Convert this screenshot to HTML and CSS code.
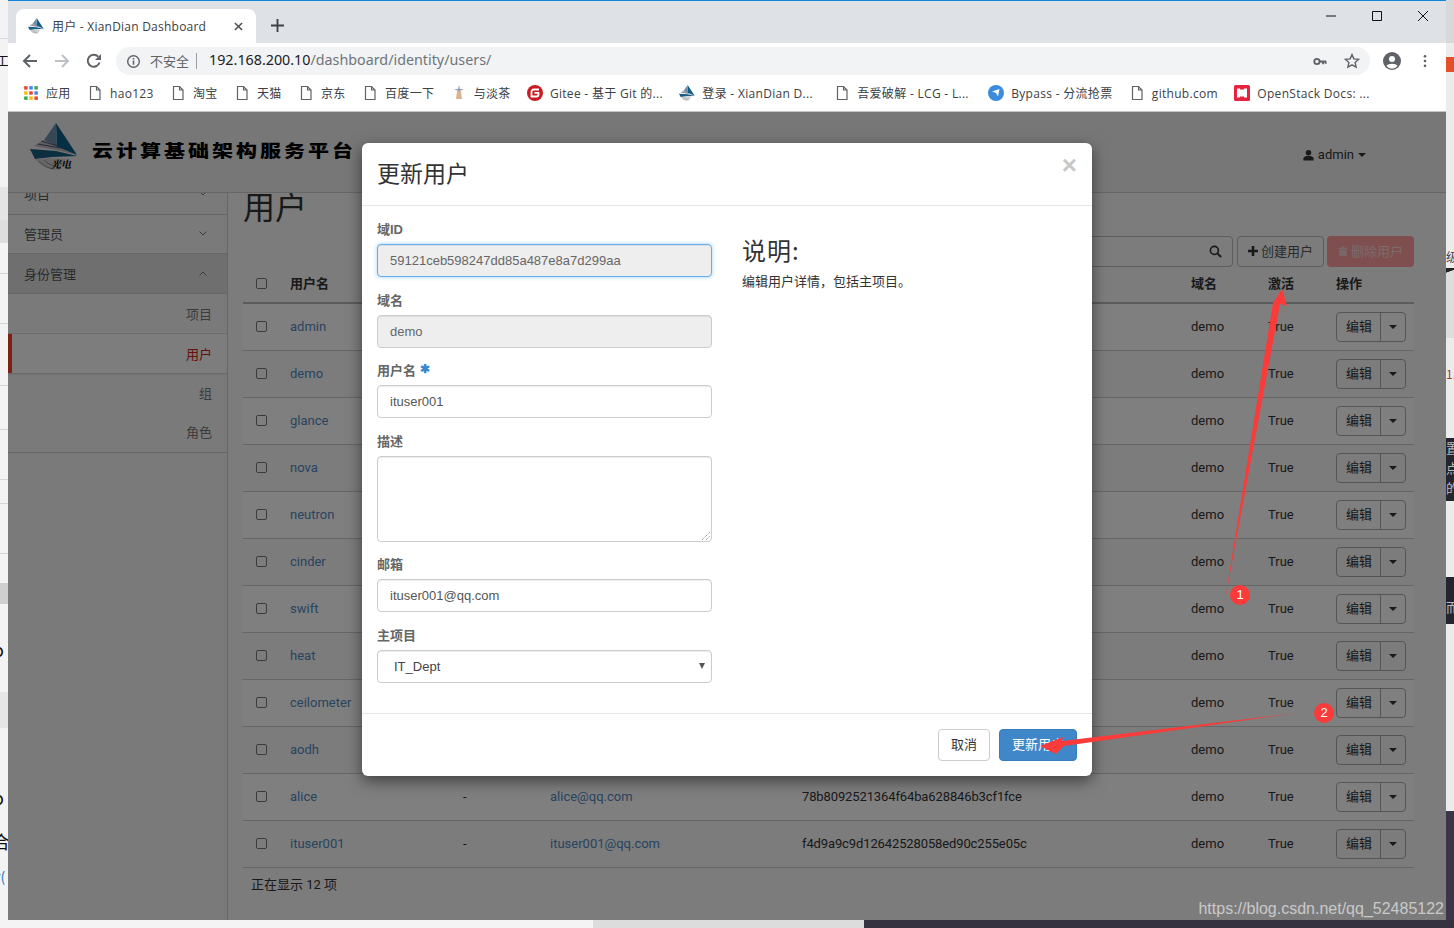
FILE: index.html
```html
<!DOCTYPE html>
<html lang="zh-CN">
<head>
<meta charset="utf-8">
<title>用户 - XianDian Dashboard</title>
<link rel="stylesheet" href="styles.css">
</head>
<body>
<svg class="defs" width="0" height="0" aria-hidden="true">
  <symbol id="doc" viewBox="0 0 16 16"><path d="M3.5 1.5h6l3.5 3.5v9.5h-9.5zM9.5 1.5v3.5h3.5" fill="none" stroke="#5f6368" stroke-width="1.2"/></symbol>
  <symbol id="logo" viewBox="0 0 48 48">
    <path d="M26 0L47 32L27 24Z" fill="#0d5e86"/>
    <path d="M26 0L27 24L14 17Z" fill="#6d8eaa"/>
    <path d="M14 17L27 24L47 32L26 27L4 23Z" fill="#b9b9c4"/>
    <path d="M8 21L30 25M11 18L28 23" stroke="#55556a" stroke-width="1" fill="none"/>
    <path d="M0 26L26 28L47 33L22 34L5 36Z" fill="#175c83"/>
    <path d="M5 36C12 45 22 48 30 46L36 36L20 35Z" fill="#cfcfcf"/>
    <path d="M9 38C14 43 18 45 24 46M14 37C18 41 22 43 28 44" stroke="#777" stroke-width=".8" fill="none"/>
  </symbol>
</svg>
<div class="desktop">
  <div class="side-strip strip-left">
    <span class="bit bit-gong">工具</span>
    <span class="bit bit-o1">o</span>
    <span class="bit bit-o2">o</span>
    <span class="bit bit-he">合</span>
    <span class="bit bit-r">r(</span>
  </div>
  <div class="window">
    <div class="tabstrip">
      <div class="tab">
        <svg class="tab-icon"><use href="#logo"/></svg>
        <span class="tab-title">用户 - XianDian Dashboard</span>
        <svg class="tab-x" viewBox="0 0 10 10"><path d="M1 1l8 8M9 1l-8 8" stroke="#45484c" stroke-width="1.6"/></svg>
      </div>
      <svg class="tab-new" viewBox="0 0 12 12"><path d="M6 0v12M0 6h12" stroke="#3c4043" stroke-width="1.7"/></svg>
      <div class="win-controls">
        <svg viewBox="0 0 12 12"><path d="M1 6h10" stroke="#111" stroke-width="1"/></svg>
        <svg viewBox="0 0 12 12"><path d="M1.5 1.5h9v9h-9z" fill="none" stroke="#111" stroke-width="1"/></svg>
        <svg viewBox="0 0 12 12"><path d="M1 1l10 10M11 1L1 11" stroke="#111" stroke-width="1"/></svg>
      </div>
    </div>
    <div class="toolbar">
      <svg class="nav" viewBox="0 0 16 16"><path d="M15 8H2M8 2L2 8l6 6" fill="none" stroke="#5f6368" stroke-width="2"/></svg>
      <svg class="nav" viewBox="0 0 16 16"><path d="M1 8h13M8 2l6 6-6 6" fill="none" stroke="#bdc1c6" stroke-width="2"/></svg>
      <svg class="nav" viewBox="0 0 16 16"><path d="M13.5 9.5A6 6 0 1 1 12.2 3.7" fill="none" stroke="#5f6368" stroke-width="2"/><path d="M15 1v6H9z" fill="#5f6368"/></svg>
      <div class="omnibox">
        <svg class="info" viewBox="0 0 16 16"><circle cx="8" cy="8" r="6.2" fill="none" stroke="#5f6368" stroke-width="1.5"/><path d="M8 7v4.5M8 4.2v1.6" stroke="#5f6368" stroke-width="1.6"/></svg>
        <span class="insecure">不安全</span>
        <span class="omni-sep"></span>
        <span class="url"><b>192.168.200.10</b>/dashboard/identity/users/</span>
        <svg class="key" viewBox="0 0 16 10"><circle cx="4.5" cy="5" r="3" fill="none" stroke="#5f6368" stroke-width="2.2"/><path d="M7 5h8M11.5 5v3M14.5 5v2.5" stroke="#5f6368" stroke-width="2.2"/></svg>
        <svg class="star" viewBox="0 0 16 16"><path d="M8 1.6l1.9 4.3 4.7.5-3.5 3.1 1 4.6L8 11.8l-4.1 2.3 1-4.6L1.4 6.4l4.7-.5z" fill="none" stroke="#5f6368" stroke-width="1.4"/></svg>
      </div>
      <svg class="avatar" viewBox="0 0 18 18"><circle cx="9" cy="9" r="9" fill="#5f6368"/><circle cx="9" cy="7" r="3" fill="#fff"/><path d="M3.5 14c1.5-3 9.500-3 11 0a7 7 0 0 1-11 0z" fill="#fff"/></svg>
      <svg class="kebab" viewBox="0 0 4 16"><circle cx="2" cy="2.500" r="1.500" fill="#5f6368"/><circle cx="2" cy="8" r="1.500" fill="#5f6368"/><circle cx="2" cy="13.500" r="1.500" fill="#5f6368"/></svg>
    </div>
    <div class="bookmarks">
      <div class="bm">
        <svg class="bm-icon" viewBox="0 0 14 14"><g><rect x="1" y="1" width="3" height="3" fill="#ea4335"/><rect x="5.500" y="1" width="3" height="3" fill="#4285f4"/><rect x="10" y="1" width="3" height="3" fill="#34a853"/><rect x="1" y="5.500" width="3" height="3" fill="#fbbc05"/><rect x="5.500" y="5.500" width="3" height="3" fill="#ea4335"/><rect x="10" y="5.500" width="3" height="3" fill="#4285f4"/><rect x="1" y="10" width="3" height="3" fill="#34a853"/><rect x="5.500" y="10" width="3" height="3" fill="#fbbc05"/><rect x="10" y="10" width="3" height="3" fill="#ea4335"/></g></svg>
        <span>应用</span>
      </div>
      <div class="bm"><svg class="bm-icon"><use href="#doc"/></svg><span>hao123</span></div>
      <div class="bm"><svg class="bm-icon"><use href="#doc"/></svg><span>淘宝</span></div>
      <div class="bm"><svg class="bm-icon"><use href="#doc"/></svg><span>天猫</span></div>
      <div class="bm"><svg class="bm-icon"><use href="#doc"/></svg><span>京东</span></div>
      <div class="bm"><svg class="bm-icon"><use href="#doc"/></svg><span>百度一下</span></div>
      <div class="bm">
        <svg class="bm-icon" viewBox="0 0 16 16"><path d="M8 0l1 4h4L9 6H7L3 4h4z" fill="#9aa0b8"/><path d="M6 6h4l1 8H5z" fill="#d9b48f"/></svg>
        <span>与淡茶</span>
      </div>
      <div class="bm">
        <svg class="bm-icon" viewBox="0 0 16 16"><circle cx="8" cy="8" r="8" fill="#c71d23"/><path d="M12 4.500H7A2.500 2.500 0 0 0 4.500 7v4.500H9.500A2 2 0 0 0 11.500 9.500V7.800H7.500" fill="none" stroke="#fff" stroke-width="1.800"/></svg>
        <span>Gitee - 基于 Git 的...</span>
      </div>
      <div class="bm"><svg class="bm-icon"><use href="#logo"/></svg><span>登录 - XianDian D...</span></div>
      <div class="bm bm-shift-5"><svg class="bm-icon"><use href="#doc"/></svg><span>吾爱破解 - LCG - L...</span></div>
      <div class="bm bm-shift-3">
        <svg class="bm-icon" viewBox="0 0 16 16"><circle cx="8" cy="8" r="8" fill="#3b8cdc"/><path d="M4 6.500L11.500 4 10 11.500 8 8z" fill="#fff"/></svg>
        <span>Bypass - 分流抢票</span>
      </div>
      <div class="bm"><svg class="bm-icon"><use href="#doc"/></svg><span>github.com</span></div>
      <div class="bm">
        <svg class="bm-icon" viewBox="0 0 16 16"><rect width="16" height="16" rx="1.500" fill="#e8233f"/><rect x="3" y="3.500" width="10" height="9" fill="#fff"/><rect x="6" y="3" width="4" height="1.500" fill="#e8233f"/><rect x="6" y="11.500" width="4" height="1.500" fill="#e8233f"/></svg>
        <span>OpenStack Docs: ...</span>
      </div>
    </div>

    <div class="page">
      <header class="site-header">
        <div class="brand">
          <svg class="brand-logo" viewBox="0 0 48 48"><use href="#logo"/><text x="21" y="45" class="brand-mark">光电</text></svg>
          <span class="brand-name">云计算基础架构服务平台</span>
        </div>
        <div class="user-menu">
          <svg class="user-icon" viewBox="0 0 12 12"><circle cx="6" cy="3.500" r="3" fill="#333"/><path d="M0.500 12V9.500C1 7.500 3 7 6 7s5 .5 5.500 2.500V12z" fill="#333"/></svg>
          <span>admin</span><i class="caret"></i>
        </div>
      </header>
      <div class="page-body">
        <nav class="sidebar">
          <div class="nav-list">
            <div class="nav-item">项目<svg class="chev" viewBox="0 0 8 5"><path d="M.5.500L4 4 7.500.500" fill="none" stroke="#777"/></svg></div>
            <div class="nav-item">管理员<svg class="chev" viewBox="0 0 8 5"><path d="M.5.500L4 4 7.500.500" fill="none" stroke="#777"/></svg></div>
            <div class="nav-item nav-open">身份管理<svg class="chev" viewBox="0 0 8 5"><path d="M.5 4.500L4 1l3.500 3.500" fill="none" stroke="#777"/></svg></div>
            <div class="nav-sub nav-sub-line">项目</div>
            <div class="nav-sub nav-active">用户</div>
            <div class="nav-sub">组</div>
            <div class="nav-sub nav-last">角色</div>
          </div>
        </nav>
        <main class="content">
          <h1 class="page-title">用户</h1>
          <div class="table-actions">
            <div class="search-box">
              <svg viewBox="0 0 14 14"><circle cx="5.800" cy="5.800" r="4.300" fill="none" stroke="#333" stroke-width="1.800"/><path d="M9 9l4 4" stroke="#333" stroke-width="2.200"/></svg>
            </div>
            <div class="btn btn-create"><svg viewBox="0 0 10 10"><path d="M5 0v10M0 5h10" stroke="#333" stroke-width="2.600"/></svg>创建用户</div>
            <div class="btn btn-delete"><svg viewBox="0 0 10 11"><path d="M0 2h10v1.500H0zM3.500.500h3v1.500h-3zM1 4h8v7H1z" fill="#f0d0d0"/></svg>删除用户</div>
          </div>
          <div class="users-table">
            <div class="row head"><span class="cell"><i class="check"></i></span><span class="cell">用户名</span><span class="cell"></span><span class="cell"></span><span class="cell"></span><span class="cell">域名</span><span class="cell">激活</span><span class="cell">操作</span></div>
            <div class="row odd"><span class="cell"><i class="check"></i></span><a class="cell link">admin</a><span class="cell">-</span><span class="cell"></span><span class="cell"></span><span class="cell">demo</span><span class="cell">True</span><span class="cell act"><span class="btn-group"><span class="btn-main">编辑</span><span class="btn-drop"><i class="caret"></i></span></span></span></div>
            <div class="row"><span class="cell"><i class="check"></i></span><a class="cell link">demo</a><span class="cell">-</span><span class="cell"></span><span class="cell"></span><span class="cell">demo</span><span class="cell">True</span><span class="cell act"><span class="btn-group"><span class="btn-main">编辑</span><span class="btn-drop"><i class="caret"></i></span></span></span></div>
            <div class="row odd"><span class="cell"><i class="check"></i></span><a class="cell link">glance</a><span class="cell">-</span><span class="cell"></span><span class="cell"></span><span class="cell">demo</span><span class="cell">True</span><span class="cell act"><span class="btn-group"><span class="btn-main">编辑</span><span class="btn-drop"><i class="caret"></i></span></span></span></div>
            <div class="row"><span class="cell"><i class="check"></i></span><a class="cell link">nova</a><span class="cell">-</span><span class="cell"></span><span class="cell"></span><span class="cell">demo</span><span class="cell">True</span><span class="cell act"><span class="btn-group"><span class="btn-main">编辑</span><span class="btn-drop"><i class="caret"></i></span></span></span></div>
            <div class="row odd"><span class="cell"><i class="check"></i></span><a class="cell link">neutron</a><span class="cell">-</span><span class="cell"></span><span class="cell"></span><span class="cell">demo</span><span class="cell">True</span><span class="cell act"><span class="btn-group"><span class="btn-main">编辑</span><span class="btn-drop"><i class="caret"></i></span></span></span></div>
            <div class="row"><span class="cell"><i class="check"></i></span><a class="cell link">cinder</a><span class="cell">-</span><span class="cell"></span><span class="cell"></span><span class="cell">demo</span><span class="cell">True</span><span class="cell act"><span class="btn-group"><span class="btn-main">编辑</span><span class="btn-drop"><i class="caret"></i></span></span></span></div>
            <div class="row odd"><span class="cell"><i class="check"></i></span><a class="cell link">swift</a><span class="cell">-</span><span class="cell"></span><span class="cell"></span><span class="cell">demo</span><span class="cell">True</span><span class="cell act"><span class="btn-group"><span class="btn-main">编辑</span><span class="btn-drop"><i class="caret"></i></span></span></span></div>
            <div class="row"><span class="cell"><i class="check"></i></span><a class="cell link">heat</a><span class="cell">-</span><span class="cell"></span><span class="cell"></span><span class="cell">demo</span><span class="cell">True</span><span class="cell act"><span class="btn-group"><span class="btn-main">编辑</span><span class="btn-drop"><i class="caret"></i></span></span></span></div>
            <div class="row odd"><span class="cell"><i class="check"></i></span><a class="cell link">ceilometer</a><span class="cell">-</span><span class="cell"></span><span class="cell"></span><span class="cell">demo</span><span class="cell">True</span><span class="cell act"><span class="btn-group"><span class="btn-main">编辑</span><span class="btn-drop"><i class="caret"></i></span></span></span></div>
            <div class="row"><span class="cell"><i class="check"></i></span><a class="cell link">aodh</a><span class="cell">-</span><span class="cell"></span><span class="cell"></span><span class="cell">demo</span><span class="cell">True</span><span class="cell act"><span class="btn-group"><span class="btn-main">编辑</span><span class="btn-drop"><i class="caret"></i></span></span></span></div>
            <div class="row odd"><span class="cell"><i class="check"></i></span><a class="cell link">alice</a><span class="cell">-</span><a class="cell link">alice@qq.com</a><span class="cell hash">78b8092521364f64ba628846b3cf1fce</span><span class="cell">demo</span><span class="cell">True</span><span class="cell act"><span class="btn-group"><span class="btn-main">编辑</span><span class="btn-drop"><i class="caret"></i></span></span></span></div>
            <div class="row"><span class="cell"><i class="check"></i></span><a class="cell link">ituser001</a><span class="cell">-</span><a class="cell link">ituser001@qq.com</a><span class="cell hash">f4d9a9c9d12642528058ed90c255e05c</span><span class="cell">demo</span><span class="cell">True</span><span class="cell act"><span class="btn-group"><span class="btn-main">编辑</span><span class="btn-drop"><i class="caret"></i></span></span></span></div>
            <div class="table-foot">正在显示 12 项</div>
          </div>
        </main>
      </div>

      <div class="backdrop"></div>

      <section class="modal">
        <div class="modal-head">
          <h2>更新用户</h2>
          <span class="close">×</span>
        </div>
        <div class="modal-body">
          <form class="form-col">
            <div class="group"><label>域ID</label><div class="field readonly focused">59121ceb598247dd85a487e8a7d299aa</div></div>
            <div class="group"><label>域名</label><div class="field readonly">demo</div></div>
            <div class="group"><label>用户名 <em class="req">✱</em></label><div class="field">ituser001</div></div>
            <div class="group"><label>描述</label>
              <div class="field textarea"><svg class="grip" viewBox="0 0 8 8"><path d="M0 8l8-8M4 8l4-4" stroke="#777" stroke-width="1" stroke-dasharray="1 1"/></svg></div>
            </div>
            <div class="group"><label>邮箱</label><div class="field">ituser001@qq.com</div></div>
            <div class="group"><label>主项目</label><div class="field select">IT_Dept<i class="select-arrow"></i></div></div>
          </form>
          <aside class="help">
            <h3>说明:</h3>
            <p>编辑用户详情，包括主项目。</p>
          </aside>
        </div>
        <div class="modal-foot">
          <span class="mbtn mbtn-cancel">取消</span>
          <span class="mbtn mbtn-primary">更新用户</span>
        </div>
      </section>
      <div class="watermark">https://blog.csdn.net/qq_52485122</div>
    </div>
  </div>
  <div class="side-strip strip-right">
    <span class="rbox rbox-orange"></span>
    <span class="bit rbit-1">级</span>
    <span class="bit rbit-2">设</span>
    <span class="rbox rbox-sketch"></span>
    <span class="bit rbit-3">1.</span>
    <span class="rbox rbox-dark1">置<br>点<br>的</span>
    <span class="rbox rbox-dark2">而</span>
    <span class="rbox rbox-bottom"></span>
  </div>
  <div class="bottom-strip"><span class="bs-a"></span><span class="bs-b"></span><span class="bs-c"></span></div>

  <svg class="annotations" viewBox="0 0 1454 928">
    <polygon points="1282,289 1287,306 1280,304 1224,606 1273,303" fill="#fb3a3a"/>
    <polygon points="1040,746 1063,737 1062,741 1297,713 1064,746 1056,754" fill="#fb3a3a"/>
  </svg>
  <span class="badge badge-1">1</span>
  <span class="badge badge-2">2</span>
</div>
</body>
</html>
```
FILE: styles.css
```css
* { box-sizing: border-box; }
html, body { margin: 0; padding: 0; height: 100%; }
body { overflow: hidden; background: #fff; font-family: Roboto, "Noto Sans CJK SC", sans-serif; font-size: 13px; color: #333; }
.defs { position: absolute; }

.desktop { position: relative; width: 1454px; height: 928px; display: grid; grid-template-columns: 8px 1438px 8px; grid-template-rows: 920px 8px; overflow: hidden; }

/* strips of the windows behind */
.side-strip { position: relative; overflow: hidden; font-family: "Noto Sans CJK SC", sans-serif; }
.strip-left {
  background-color: #f3f3f3;
  background-image:
    linear-gradient(#d8d8d8, #d8d8d8), linear-gradient(#dedede, #dedede), linear-gradient(#e4e4e4, #e4e4e4),
    linear-gradient(#d6d6d6, #d6d6d6), linear-gradient(#d6d6d6, #d6d6d6), linear-gradient(#d6d6d6, #d6d6d6),
    linear-gradient(#d6d6d6, #d6d6d6), linear-gradient(#d6d6d6, #d6d6d6), linear-gradient(#d6d6d6, #d6d6d6),
    linear-gradient(#d6d6d6, #d6d6d6), linear-gradient(#cfcfcf, #cfcfcf), linear-gradient(#e6e6e6, #e6e6e6);
  background-repeat: no-repeat;
  background-size: 100% 1px, 100% 23px, 100% 33px, 100% 1px, 100% 1px, 100% 1px, 100% 1px, 100% 1px, 100% 1px, 100% 1px, 100% 21px, 100% 36px;
  background-position: 0 38px, 0 220px, 0 187px, 0 273px, 0 323px, 0 385px, 0 429px, 0 479px, 0 503px, 0 553px, 0 583px, 0 692px;
}
.bit { position: absolute; color: #111; white-space: nowrap; }
.bit-gong { left: -4px; top: 50px; font-size: 13px; }
.bit-o1 { left: -7px; top: 636px; font-size: 18px; }
.bit-o2 { left: -7px; top: 784px; font-size: 18px; }
.bit-he { left: -8px; top: 828px; font-size: 18px; }
.bit-r { left: -5px; top: 866px; font-size: 14px; color: #1a78c2; }
.strip-right { background: #ececec; border-top: 43px solid #d8d8d8; }
.strip-right .rbox { position: absolute; display: block; left: 0; width: 8px; }
.rbox-orange { top: 14px; height: 15px; background: #e2512a; }
.rbit-1 { left: 0; top: 205px; font-size: 12px; color: #444; }
.rbit-2 { left: 0; top: 234px; font-size: 12px; color: #444; }
.rbit-3 { left: 0; top: 322px; font-size: 12px; color: #a33; }
.strip-right .rbox-sketch { top: 225px; height: 70px; background: linear-gradient(160deg, #222 0 6%, #ddd 7% 100%); }
.strip-right .rbox-dark1 { top: 395px; height: 63px; background: #23262e; color: #bbb; font-size: 13px; line-height: 20px; overflow: hidden; }
.strip-right .rbox-dark2 { top: 534px; height: 47px; padding-top: 20px; background: #23262e; color: #bbb; font-size: 13px; line-height: 20px; overflow: hidden; }
.strip-right .rbox-bottom { top: 768px; height: 110px; background: #3b3647; }
.bottom-strip { grid-column: 1 / -1; display: flex; height: 8px; }
.bs-a { width: 593px; background: #f4f4f4; }
.bs-b { width: 271px; background: #dcdcdc; }
.bs-c { flex: 1; background: #37323f; }

/* browser window */
.window { display: flex; flex-direction: column; height: 920px; background: #fff; box-shadow: 0 0 4px rgba(0,0,0,.35); }
.tabstrip { height: 43px; flex: none; display: flex; align-items: flex-end; padding-left: 8px; background: #dee1e6; border-top: 1px solid #1183d8; position: relative; }
.tab { width: 240px; height: 34px; display: flex; align-items: center; padding: 0 13px 0 12px; background: #fff; border-radius: 8px 8px 0 0; }
.tab-icon { width: 16px; height: 16px; flex: none; }
.tab-title { margin-left: 8px; flex: 1; font: 12px "Open Sans", "Noto Sans CJK SC", sans-serif; letter-spacing: .23px; color: #3c4043; white-space: nowrap; }
.tab-x { width: 9px; height: 9px; }
.tab-new { width: 13px; height: 13px; margin: 0 0 11px 15px; }
.win-controls { margin-left: auto; align-self: flex-start; display: flex; gap: 34px; padding: 9px 17px 0 0; }
.win-controls svg { width: 12px; height: 12px; display: block; }

.toolbar { height: 32px; flex: none; display: flex; align-items: center; padding: 0 21px 0 14px; background: #fff; }
.nav { width: 16px; height: 16px; margin-right: 16px; flex: none; }
.omnibox { margin-left: -2px; height: 28px; width: 1254px; flex: none; display: flex; align-items: center; padding: 0 10px; background: #f1f3f4; border-radius: 14px; margin-top: 4px; }
.toolbar .nav { margin-top: 4px; }
.info { width: 15px; height: 15px; flex: none; }
.insecure { margin-left: 9px; padding-bottom: 2px; font-size: 13px; font-family: "Noto Sans CJK SC", sans-serif; color: #5f6368; }
.omni-sep { width: 1px; height: 16px; background: #9aa0a6; margin: 0 10px 0 7px; }
.url { font: 14.300px/20px "Noto Sans", "Noto Sans CJK SC", sans-serif; color: #70757a; padding-bottom: 2px; margin-left: 2px; }
.url b { font-weight: 400; color: #202124; }
.key { width: 14px; height: 9px; margin-left: auto; }
.star { width: 16px; height: 16px; margin: 0 0 0 17px; }
.avatar { width: 18px; height: 18px; margin: 4px 0 0 13px; flex: none; }
.kebab { width: 4px; height: 14px; margin: 4px 0 0 22px; flex: none; }

.bookmarks { height: 37px; flex: none; display: flex; align-items: center; gap: 16.400px; padding: 0 0 0 15px; background: #fff; border-bottom: 1px solid #c4c4c4; font: 12px "Open Sans", "Noto Sans CJK SC", sans-serif; letter-spacing: .3px; color: #3c4043; white-space: nowrap; }
.bm { display: flex; align-items: center; gap: 7px; }
.bm-icon { width: 16px; height: 16px; flex: none; }
.bm-shift-5 { margin-left: 5px; }
.bm-shift-3 { margin-left: 3px; }

/* dashboard page */
.page { position: relative; flex: 1; min-height: 0; display: flex; flex-direction: column; overflow: hidden; background: #f8f8f8; }
.site-header { height: 81px; flex: none; display: flex; align-items: flex-start; justify-content: space-between; background: #eee; border-bottom: 1px solid #ccc; position: relative; z-index: 1; }
.brand { display: flex; align-items: center; padding: 11px 0 0 22px; }
.brand-logo { width: 48px; height: 48px; flex: none; }
.brand-mark { font: italic 700 10px "Noto Serif CJK SC", "Noto Sans CJK SC", sans-serif; fill: #000; }
.brand-name { display: inline-block; margin: 6px 0 0 14px; font: 900 21px/24px "Noto Sans CJK SC", sans-serif; letter-spacing: 3px; color: #000; white-space: nowrap; transform: scaleY(.8); }
.user-menu { display: flex; align-items: center; padding: 35px 80px 0 0; font-size: 13px; color: #333; }
.user-icon { width: 11px; height: 12px; margin-right: 4px; }
.caret { display: inline-block; width: 0; height: 0; border-left: 4px solid transparent; border-right: 4px solid transparent; border-top: 4px solid #333; }
.user-menu .caret { margin-left: 4px; }

.page-body { flex: 1; min-height: 0; display: flex; }
.sidebar { width: 220px; flex: none; overflow: hidden; background: #f5f5f5; border-right: 1px solid #ccc; }
.nav-list { margin-top: -18px; }
.nav-item { height: 39.700px; display: flex; align-items: center; justify-content: space-between; padding: 0 20px 2px 16px; border-bottom: 1px solid #ccc; color: #555; background: #f5f5f5; }
.chev { width: 8px; height: 5px; }
.nav-open { background: #dedede; padding-bottom: 1px; }
.nav-sub { height: 39.700px; display: flex; align-items: center; justify-content: flex-end; padding: 0 15px 2px 0; color: #777; position: relative; }
.nav-sub-line { border-bottom: 1px solid #ddd; padding-bottom: 0; }
.nav-active { color: #cc2211; background: #fafafa; border-left: 4px solid #fe402a; box-shadow: 0 1px 2px rgba(0,0,0,.2); margin-right: -1px; padding: 0 16px 0 0; }
.nav-last { border-bottom: 1px solid #ccc; }

.content { flex: 1; min-width: 0; padding: 0 32px 0 15px; }
.page-title { margin: -4px 0 0; font: 400 32px/32px "Noto Sans CJK SC", sans-serif; color: #333; }
.table-actions { display: flex; justify-content: flex-end; align-items: stretch; height: 31px; margin-top: 15px; gap: 3px; }
.search-box { width: 300px; margin-right: 1px; display: flex; align-items: center; justify-content: flex-end; padding: 0 10px 1px 0; border: 1px solid #bbb; border-radius: 4px; }
.search-box svg { width: 13px; height: 13px; }
.btn { display: flex; align-items: center; justify-content: center; width: 87px; padding-bottom: 3px; border-radius: 4px; font-size: 13px; }
.btn svg { width: 10px; height: 10px; margin: 2px 3px 0 0; }
.btn-create { border: 1px solid #bbb; color: #555; }
.btn-delete { background: #ff9e9e; color: #f5d5d5; }

.row { display: grid; grid-template-columns: 47px 173px 87px 252px 389px 77px 68px 78px; align-items: center; height: 47px; border-bottom: 1px solid #ccc; }
.row.odd { background: #fff; }
.row.head { height: 37px; border-bottom: 2px solid #b8b8b8; font-weight: 700; }
.cell { display: block; white-space: nowrap; padding-bottom: 2px; }
.cell.act { padding-bottom: 0; }
.head .cell { color: #333; font-weight: 700; padding-bottom: 4px; }
.check { display: block; width: 11px; height: 11px; margin: 1px 0 0 13px; border: 1px solid #777; border-radius: 2px; }
.link { color: #5288c0; text-decoration: none; }
.hash { letter-spacing: -.12px; }
.btn-group { display: flex; width: 70px; height: 30px; border: 1px solid #aaa; border-radius: 4px; }
.btn-main { flex: 1; display: flex; align-items: center; justify-content: center; padding: 0 0 3px 1px; }
.btn-drop { width: 25px; display: flex; align-items: center; justify-content: center; border-left: 1px solid #aaa; }
.table-foot { padding: 8px; line-height: 18px; color: #333; }

.backdrop { position: absolute; inset: 0; background: rgba(0,0,0,.5); z-index: 2; }

/* modal */
.modal { position: absolute; left: 354px; top: 31px; width: 730px; height: 633px; z-index: 3; display: flex; flex-direction: column; background: #fff; border-radius: 6px; box-shadow: 0 5px 15px rgba(0,0,0,.5); font-family: "Liberation Sans", "Noto Sans CJK SC", sans-serif; }
.modal-head { height: 63px; flex: none; display: flex; align-items: center; justify-content: space-between; padding: 0 15px 4px 15px; border-bottom: 1px solid #e5e5e5; }
.modal-head h2 { margin: 0; font: 400 23px "Noto Sans CJK SC", sans-serif; color: #333; }
.close { align-self: flex-start; margin-top: 4px; font: 700 26px/36px "Liberation Sans", sans-serif; color: #c8c8c8; }
.modal-body { flex: 1; min-height: 0; display: flex; gap: 30px; padding: 14px 15px 0; }
.form-col { width: 335px; flex: none; }
.group { margin-bottom: 13.500px; }
.group label { display: block; height: 19px; margin-bottom: 5px; font: 700 13px/19px "Liberation Sans", "Noto Sans CJK SC", sans-serif; color: #666; }
.req { position: relative; top: -2px; font-style: normal; font-size: 12px; color: #3a87cf; }
.field { position: relative; height: 33px; padding: 0 12px; border: 1px solid #ccc; border-radius: 4px; font-size: 13px; line-height: 31px; color: #555; background: #fff; box-shadow: inset 0 1px 1px rgba(0,0,0,.075); }
.readonly { background: #eee; color: #666; }
.focused { border-color: #66afe9; box-shadow: inset 0 1px 1px rgba(0,0,0,.075), 0 0 4px rgba(102,175,233,.6); }
.textarea { height: 86px; }
.grip { position: absolute; right: 1px; bottom: 1px; width: 8px; height: 8px; }
.select { padding-left: 16px; color: #444; }
.select-arrow { position: absolute; right: 6px; top: 12px; border-left: 3px solid transparent; border-right: 3px solid transparent; border-top: 6px solid #555; }
.help h3 { margin: 14px 0 6px; font: 400 24px/32px "Noto Sans CJK SC", sans-serif; letter-spacing: 1px; color: #333; }
.help p { margin: 0; font: 13px/18px "Noto Sans CJK SC", sans-serif; color: #333; }
.modal-foot { height: 63px; flex: none; display: flex; justify-content: flex-end; align-items: flex-start; gap: 9px; padding: 15px 15px 0; border-top: 1px solid #e5e5e5; }
.mbtn { height: 32px; display: flex; align-items: center; justify-content: center; padding-bottom: 3px; border-radius: 4px; font: 13px "Noto Sans CJK SC", sans-serif; }
.mbtn-cancel { width: 52px; border: 1px solid #ccc; color: #333; background: #fff; }
.mbtn-primary { width: 78px; background: #3f87c8; border: 1px solid #357ebd; color: #fff; }

.watermark { position: absolute; right: 2px; bottom: 2px; z-index: 4; font: 16px "Liberation Sans", sans-serif; color: rgba(255,255,255,.6); }

/* annotations on top of the screenshot */
.annotations { position: absolute; left: 0; top: 0; width: 1454px; height: 928px; pointer-events: none; z-index: 5; }
.badge { position: absolute; z-index: 6; width: 20px; height: 20px; border-radius: 50%; background: #fb3a3a; color: #fff; font: 13px/20px "Liberation Sans", sans-serif; text-align: center; }
.badge-1 { left: 1230px; top: 585px; }
.badge-2 { left: 1314px; top: 703px; }
```
